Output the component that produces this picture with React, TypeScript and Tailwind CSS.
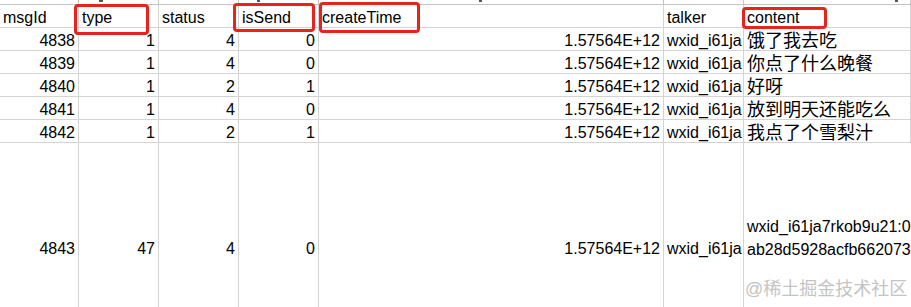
const rows = [
  { id: "4838", type: "1", status: "4", isSend: "0", content: "饿了我去吃" },
  { id: "4839", type: "1", status: "4", isSend: "0", content: "你点了什么晚餐" },
  { id: "4840", type: "1", status: "2", isSend: "1", content: "好呀" },
  { id: "4841", type: "1", status: "4", isSend: "0", content: "放到明天还能吃么" },
  { id: "4842", type: "1", status: "2", isSend: "1", content: "我点了个雪梨汁" },
];

// the talker column is too narrow, only this much shows
const talker = "wxid_i61ja";
const createTime = "1.57564E+12";

// one grid cell, text sits near the bottom like Excel
function Cell({ children, right, tall }: { children?: React.ReactNode; right?: boolean; tall?: boolean }) {
  return (
    <div
      className={`flex overflow-hidden whitespace-nowrap border-r border-b border-[#d4d4d4] leading-[18px] ${
        tall ? "items-start pt-[97px]" : "items-end"
      } ${right ? "justify-end pr-[3px]" : "pl-[3px]"}`}
    >
      {children}
    </div>
  );
}

function Header({ children }: { children: React.ReactNode }) {
  return <Cell>{children}</Cell>;
}

export default function App() {
  return (
    <div className="relative h-[307px] w-[911px] overflow-hidden bg-white font-['Liberation_Sans','Noto_Sans_CJK_SC',sans-serif] text-[16px] text-black">
      <div className="grid grid-cols-[79px_80px_80px_80px_345px_80px_1fr] grid-rows-[5px_repeat(6,23px)_212px]">
        {/* strip of the row above, cut off */}
        {Array.from({ length: 7 }).map((_, i) => (
          <div key={i} className="border-r border-b border-[#c4c4c4]" />
        ))}

        <Header>msgId</Header>
        <Header>type</Header>
        <Header>status</Header>
        <Header>isSend</Header>
        <Header>createTime</Header>
        <Header>talker</Header>
        <Header>content</Header>

        {rows.map((r) => (
          <div key={r.id} className="contents">
            <Cell right>{r.id}</Cell>
            <Cell right>{r.type}</Cell>
            <Cell right>{r.status}</Cell>
            <Cell right>{r.isSend}</Cell>
            <Cell right>{createTime}</Cell>
            <Cell>{talker}</Cell>
            <Cell>
              <span className="text-[18px] leading-[18px]">{r.content}</span>
            </Cell>
          </div>
        ))}

        <Cell right tall>4843</Cell>
        <Cell right tall>47</Cell>
        <Cell right tall>4</Cell>
        <Cell right tall>0</Cell>
        <Cell right tall>{createTime}</Cell>
        <Cell tall>{talker}</Cell>
        <div className="overflow-hidden whitespace-nowrap border-b border-[#d4d4d4] pl-[3px] pt-[72px] leading-[23px]">
          <div>wxid_i61ja7rkob9u21:0</div>
          <div>ab28d5928acfb662073f6c41</div>
        </div>
      </div>

      {/* letter tails from the row above */}
      <span className="absolute left-[99px] top-0 h-[2px] w-[4px] bg-[#555]" />
      <span className="absolute left-[257px] top-0 h-[2px] w-[3px] bg-[#555]" />
      <span className="absolute left-[479px] top-0 h-[2px] w-[3px] bg-[#555]" />
      <span className="absolute left-[895px] top-0 h-[2px] w-[3px] bg-[#555]" />

      {/* red highlight boxes */}
      <div className="absolute left-[74px] top-[4px] h-[31px] w-[75px] rounded-[4px] border-[3px] border-[#e8221d]" />
      <div className="absolute left-[233px] top-[3px] h-[29px] w-[82px] rounded-[4px] border-[3px] border-[#e8221d]" />
      <div className="absolute left-[319px] top-[2px] h-[31px] w-[101px] rounded-[4px] border-[3px] border-[#e8221d]" />
      <div className="absolute left-[742px] top-[7px] h-[22px] w-[85px] rounded-[4px] border-[3px] border-[#e8221d]" />

      {/* watermark */}
      <div className="absolute left-[745px] top-[279px] whitespace-nowrap text-[18px] leading-[20px] text-[#c4c4c4]">
        @稀土掘金技术社区
      </div>
    </div>
  );
}
